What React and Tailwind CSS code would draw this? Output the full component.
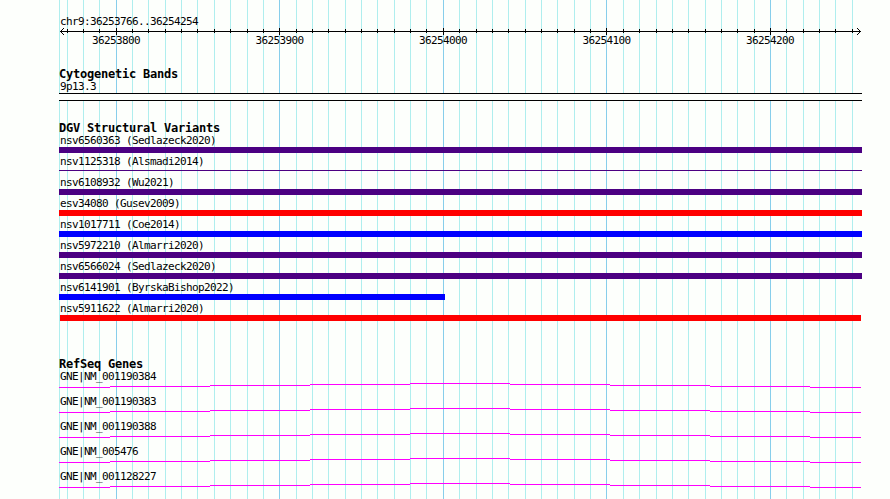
import React from "react";

const MAJOR_LINES = [116, 279, 443, 606, 770];

const MINOR_LINES = [
  67, 83, 99, 132, 148, 165, 181, 197, 214, 230, 247, 263, 296, 312, 328, 345,
  361, 377, 394, 410, 426, 459, 476, 492, 508, 525, 541, 557, 574, 590, 623,
  639, 656, 672, 688, 705, 721, 737, 754, 786, 803, 819, 835, 852,
];

const POSITIONS = ["36253800", "36253900", "36254000", "36254100", "36254200"];

const VARIANTS = [
  { name: "nsv6560363 (Sedlazeck2020)", bar: "w-[803px] h-1.5 bg-[#4b0082]" },
  { name: "nsv1125318 (Alsmadi2014)", bar: "w-[803px] h-px mt-0.5 bg-[#4b0082]" },
  { name: "nsv6108932 (Wu2021)", bar: "w-[803px] h-1.5 bg-[#4b0082]" },
  { name: "esv34080 (Gusev2009)", bar: "w-[803px] h-1.5 bg-[#ff0000]" },
  { name: "nsv1017711 (Coe2014)", bar: "w-[803px] h-1.5 bg-[#0000ff]" },
  { name: "nsv5972210 (Almarri2020)", bar: "w-[803px] h-1.5 bg-[#4b0082]" },
  { name: "nsv6566024 (Sedlazeck2020)", bar: "w-[803px] h-1.5 bg-[#4b0082]" },
  { name: "nsv6141901 (ByrskaBishop2022)", bar: "w-[386px] h-1.5 bg-[#0000ff]" },
  { name: "nsv5911622 (Almarri2020)", bar: "w-[801px] h-1.5 ml-px bg-[#ff0000]" },
];

const GENES = [
  "GNE|NM_001190384",
  "GNE|NM_001190383",
  "GNE|NM_001190388",
  "GNE|NM_005476",
  "GNE|NM_001128227",
];

// Intron segments: [start x, width, y], relative to the left edge of the track
const INTRON = [
  [0, 51, 4],
  [51, 100, 3],
  [151, 100, 2],
  [251, 100, 1],
  [351, 100, 0],
  [451, 100, 1],
  [551, 100, 2],
  [651, 100, 3],
  [751, 51, 4],
];

const Grid = () => (
  <svg
    className="absolute inset-0 -z-10"
    width="890"
    height="499"
    shapeRendering="crispEdges"
  >
    {[59, ...MINOR_LINES].map((x) => (
      <rect key={x} x={x} y="0" width="1" height="499" fill="#afeeee" />
    ))}
    {MAJOR_LINES.map((x) => (
      <rect key={x} x={x} y="0" width="1" height="499" fill="#87ceeb" />
    ))}
  </svg>
);

const Label = ({ children }) => (
  <div className="h-3 pl-px text-[11px] leading-[14px] tracking-[-0.622px] whitespace-pre">
    {children}
  </div>
);

const Heading = ({ children }) => (
  <h2 className="h-3 text-[12px] leading-3 font-bold tracking-[-0.224px] whitespace-pre">
    {children}
  </h2>
);

const Ruler = () => (
  <div>
    <Label>chr9:36253766..36254254</Label>
    <svg
      className="mt-px block"
      width="803"
      height="7"
      viewBox="59 28 803 7"
      shapeRendering="crispEdges"
    >
      <rect x="60" y="31" width="801" height="1" />
      {MINOR_LINES.map((x) => (
        <rect key={x} x={x} y="29" width="1" height="4" />
      ))}
      {MAJOR_LINES.map((x) => (
        <rect key={x} x={x} y="28" width="1" height="7" />
      ))}
      {[1, 2, 3].map((d) => (
        <React.Fragment key={d}>
          <rect x={60 + d} y={31 - d} width="1" height="1" />
          <rect x={60 + d} y={31 + d} width="1" height="1" />
          <rect x={860 - d} y={31 - d} width="1" height="1" />
          <rect x={860 - d} y={31 + d} width="1" height="1" />
        </React.Fragment>
      ))}
    </svg>
    <div className="-mt-px ml-8 flex h-3 w-[703px] justify-between pl-px text-[11px] leading-[14px] tracking-[-0.622px]">
      {POSITIONS.map((pos) => (
        <span key={pos} className="w-12">
          {pos}
        </span>
      ))}
    </div>
  </div>
);

const App = () => {
  return (
    <div className="relative isolate h-[499px] w-[890px] overflow-hidden bg-[#fdfffc] pt-[15px] pl-[59px] font-['DejaVu_Sans_Mono',monospace] text-black">
      <Grid />
      <Ruler />

      <section className="mt-[22px]">
        <Heading>Cytogenetic Bands</Heading>
        <Label>9p13.3</Label>
        <div className="mt-px h-2 w-[803px] border-y border-black bg-[#fdfffc]" />
      </section>

      <section className="mt-[21px] h-[236px]">
        <Heading>DGV Structural Variants</Heading>
        {VARIANTS.map((item) => (
          <div key={item.name} className="flex h-[21px] flex-col gap-px">
            <Label>{item.name}</Label>
            <div className={item.bar} />
          </div>
        ))}
      </section>

      <section>
        <Heading>RefSeq Genes</Heading>
        {GENES.map((gene) => (
          <div key={gene} className="h-[25px]">
            <Label>{gene}</Label>
            <svg
              className="mt-px block"
              width="803"
              height="5"
              shapeRendering="crispEdges"
            >
              {INTRON.map(([x, width, y]) => (
                <rect key={x} x={x} y={y} width={width} height="1" fill="#ff00ff" />
              ))}
            </svg>
          </div>
        ))}
      </section>
    </div>
  );
};

export default App;
